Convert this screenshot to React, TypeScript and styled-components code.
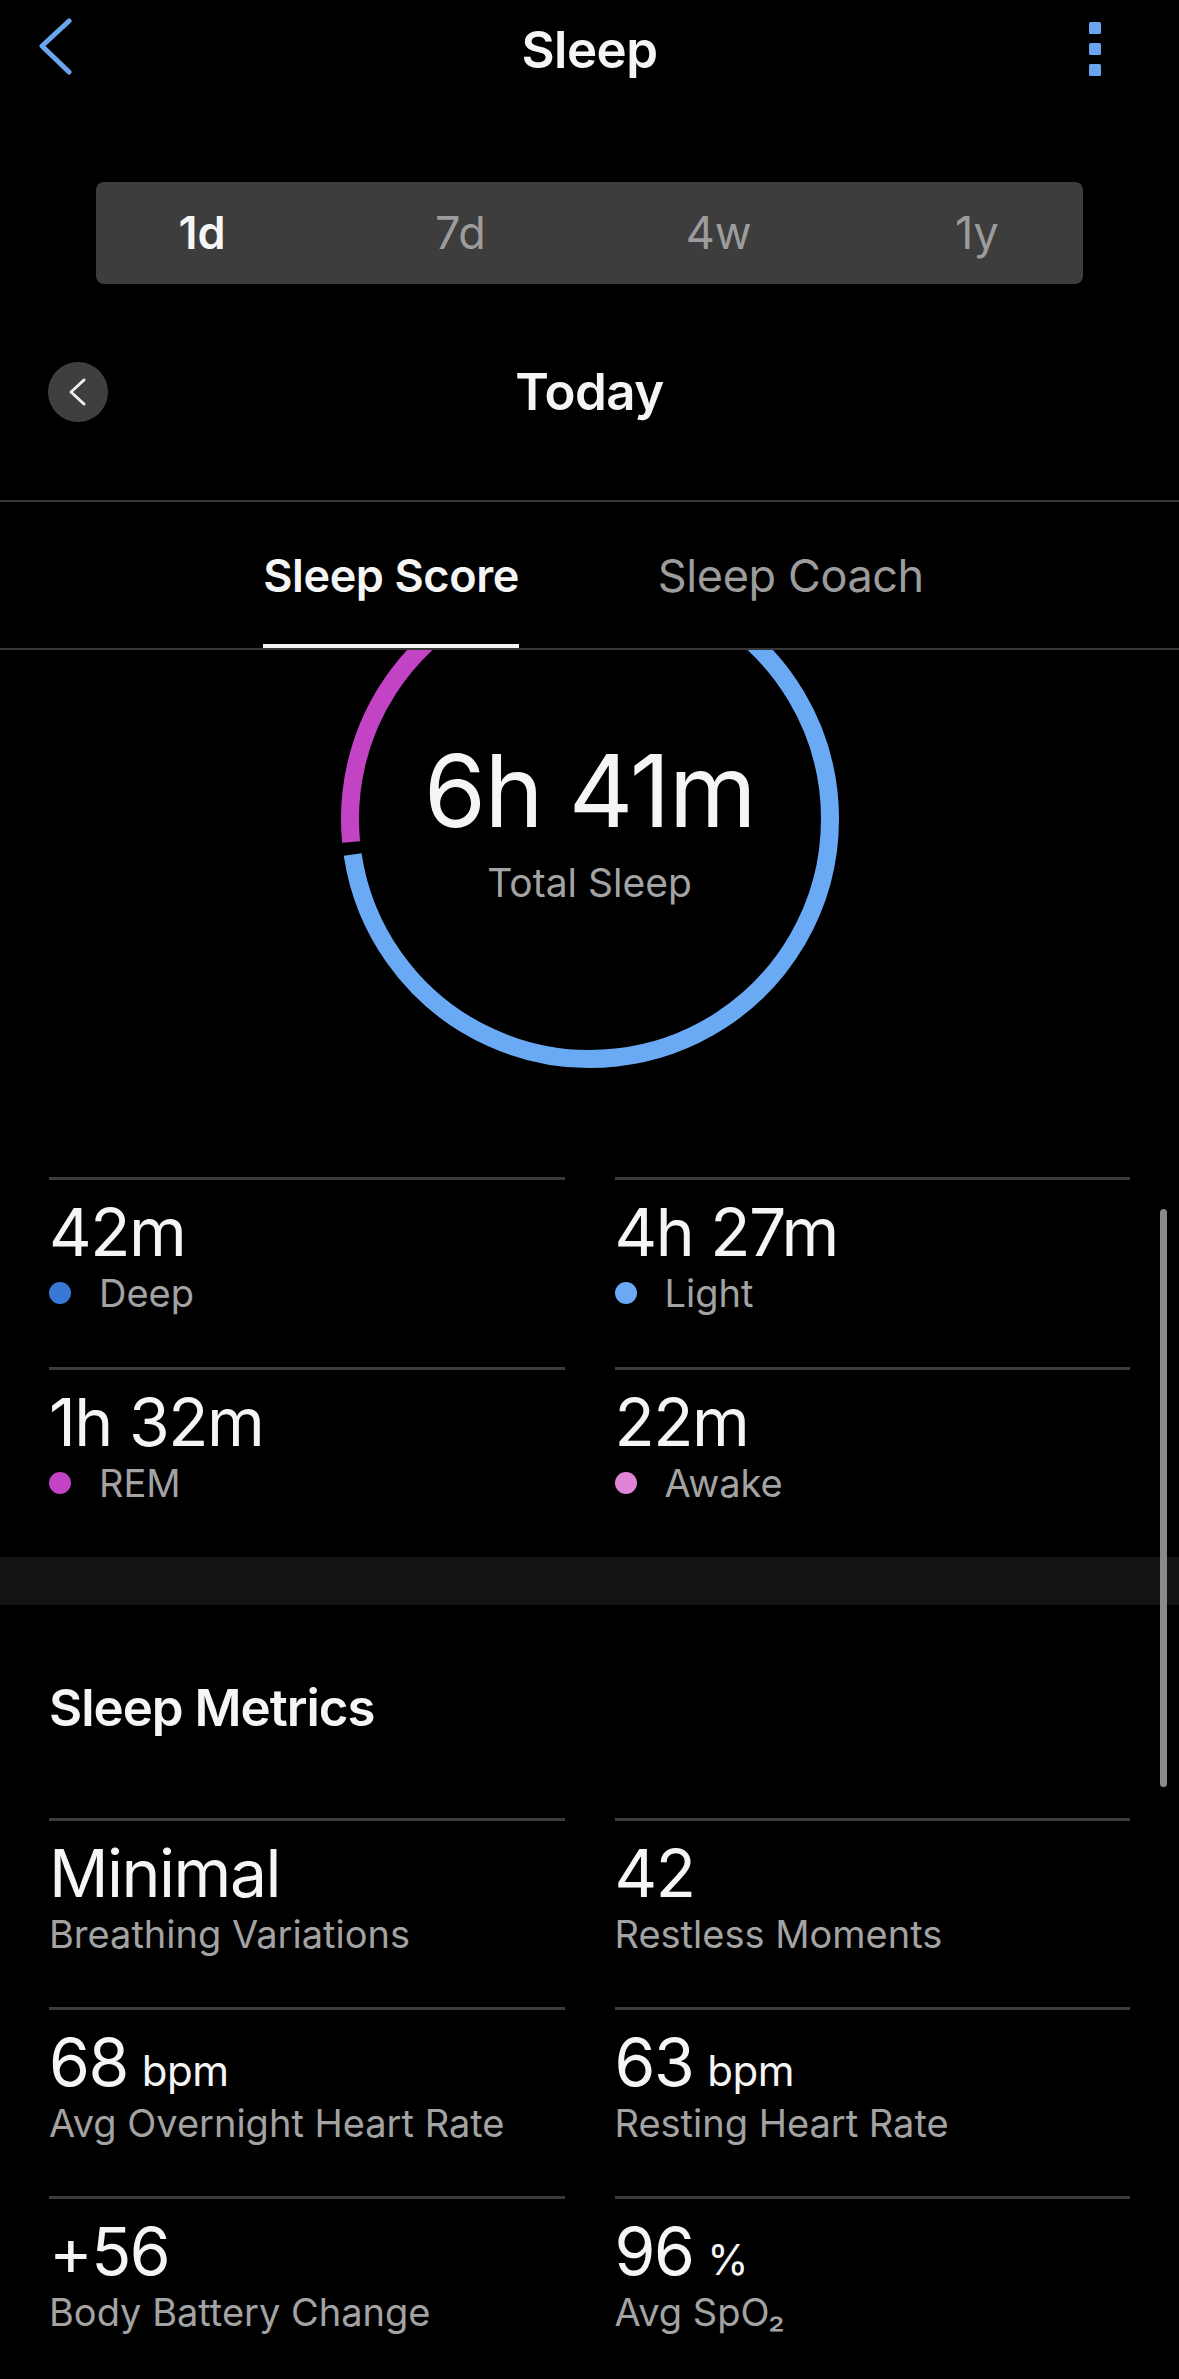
import React from 'react';
import styled, { createGlobalStyle } from 'styled-components';

const GlobalStyle = createGlobalStyle`
  html, body {
    margin: 0;
    padding: 0;
    background: #000;
    overflow: hidden;
  }
  body {
    font-family: Inter, "Noto Sans", "Liberation Sans", sans-serif;
    color: #f5f5f5;
    -webkit-font-smoothing: antialiased;
  }
  * {
    box-sizing: border-box;
  }
`;

const Screen = styled.div`
  position: relative;
  width: 1179px;
  height: 2379px;
  overflow: hidden;
  background: #000;
`;

const NavBar = styled.header`
  height: 100px;
  display: grid;
  grid-template-columns: 1fr auto 1fr;
  align-items: center;
`;

const BackIcon = styled.svg`
  margin-left: 38px;
  justify-self: start;
`;

const MenuIcon = styled.svg`
  margin-right: 78px;
  justify-self: end;
`;

const Title = styled.h1`
  margin: 0;
  font-size: 51px;
  line-height: 60px;
  font-weight: 600;
  letter-spacing: -0.5px;
  color: #f5f5f5;
`;

const Segmented = styled.div`
  margin: 82px 96px 0;
  height: 102px;
  background: #3d3d3d;
  border-radius: 8px;
  display: flex;
  align-items: center;
  justify-content: space-between;
  padding: 0 46px;
`;

const Segment = styled.div<{ active?: boolean }>`
  width: 120px;
  text-align: center;
  font-size: 45px;
  line-height: 54px;
  font-weight: ${p => (p.active ? 600 : 400)};
  color: ${p => (p.active ? '#f5f5f5' : '#9c9c9c')};
`;

const DateRow = styled.div`
  height: 218px;
  display: grid;
  grid-template-columns: 1fr auto 1fr;
  align-items: center;
  border-bottom: 2px solid #383838;
`;

const RoundButton = styled.div`
  justify-self: start;
  margin-left: 48px;
  width: 60px;
  height: 60px;
  border-radius: 50%;
  background: #3f3f3f;
  display: flex;
  align-items: center;
  justify-content: center;
`;

const TabBar = styled.nav`
  height: 148px;
  display: flex;
  justify-content: center;
  gap: 139px;
  padding-left: 8px;
  border-bottom: 2px solid #383838;
`;

const Tab = styled.div<{ active?: boolean }>`
  height: 146px;
  padding-top: 4px;
  display: flex;
  align-items: center;
  font-size: 45px;
  letter-spacing: -0.4px;
  font-weight: ${p => (p.active ? 600 : 400)};
  color: ${p => (p.active ? '#f5f5f5' : '#9c9c9c')};
  border-bottom: 4px solid ${p => (p.active ? '#f5f5f5' : 'transparent')};
`;

const RingSection = styled.section`
  overflow: hidden;
`;

const RingWrap = styled.div`
  position: relative;
  width: 520px;
  height: 520px;
  margin: -91px auto 98px;
`;

const RingText = styled.div`
  position: absolute;
  inset: 0;
  display: flex;
  flex-direction: column;
  align-items: center;
  padding-top: 182px;
`;

const BigValue = styled.div`
  font-size: 100px;
  line-height: 100px;
  font-weight: 400;
  letter-spacing: -1.5px;
  color: #f5f5f5;
`;

const BigLabel = styled.div`
  margin-top: 18px;
  font-size: 39px;
  line-height: 48px;
  color: #a3a3a3;
`;

const Grid = styled.div`
  display: grid;
  grid-template-columns: 1fr 1fr;
  column-gap: 50px;
  padding: 0 49px;
`;

const Cell = styled.div<{ h: number }>`
  height: ${p => p.h}px;
  border-top: 3px solid #3c3c3c;
  padding-top: 14px;
`;

const Value = styled.div`
  font-size: 66px;
  line-height: 76px;
  font-weight: 400;
  letter-spacing: -1.5px;
  color: #f5f5f5;
`;

const Unit = styled.span`
  font-size: 42px;
  line-height: 1;
  letter-spacing: -0.5px;
  margin-left: 14px;
`;

const Label = styled.div`
  display: flex;
  align-items: center;
  font-size: 38px;
  line-height: 46px;
  color: #a3a3a3;
`;

const Dot = styled.span<{ color: string }>`
  width: 22px;
  height: 22px;
  border-radius: 50%;
  background: ${p => p.color};
  margin-right: 28px;
  flex-shrink: 0;
`;

const Band = styled.div`
  height: 48px;
  background: #131313;
`;

const SectionTitle = styled.h2`
  margin: 0;
  padding: 72px 49px 79px;
  font-size: 51px;
  line-height: 62px;
  font-weight: 600;
  letter-spacing: -1px;
  color: #f5f5f5;
`;

const ScrollThumb = styled.div`
  position: absolute;
  right: 12px;
  top: 1209px;
  width: 7px;
  height: 578px;
  border-radius: 4px;
  background: #8a8a8a;
`;

const C = 260;
const R = 240;

const pt = (deg: number) => {
  const a = (deg * Math.PI) / 180;
  return `${(C + R * Math.sin(a)).toFixed(2)} ${(C - R * Math.cos(a)).toFixed(2)}`;
};

const arc = (from: number, to: number) => {
  const large = to - from > 180 ? 1 : 0;
  return `M ${pt(from)} A ${R} ${R} 0 ${large} 1 ${pt(to)}`;
};

const ringSegments = [
  { from: -0.5, to: 30, color: '#3a78d6' },
  { from: 32.5, to: 261.5, color: '#6aaaf5' },
  { from: 264.5, to: 341, color: '#c243c4' },
  { from: 343.5, to: 357, color: '#e184d6' },
];

const stages = [
  { value: '42m', label: 'Deep', color: '#3a78d6' },
  { value: '4h 27m', label: 'Light', color: '#6aaaf5' },
  { value: '1h 32m', label: 'REM', color: '#c243c4' },
  { value: '22m', label: 'Awake', color: '#e184d6' },
];

const metrics: { value: string; unit?: string; label: string }[] = [
  { value: 'Minimal', label: 'Breathing Variations' },
  { value: '42', label: 'Restless Moments' },
  { value: '68', unit: 'bpm', label: 'Avg Overnight Heart Rate' },
  { value: '63', unit: 'bpm', label: 'Resting Heart Rate' },
  { value: '+56', label: 'Body Battery Change' },
  { value: '96', unit: '%', label: 'Avg SpO₂' },
];

export default function App() {
  return (
    <Screen>
      <GlobalStyle />
      <NavBar>
        <BackIcon width="40" height="64" viewBox="0 0 40 64">
          <polyline points="31,3 4,28 31,54" fill="none" stroke="#6aa6f0" strokeWidth="5" strokeLinecap="round" strokeLinejoin="round" />
        </BackIcon>
        <Title>Sleep</Title>
        <MenuIcon width="12" height="56" viewBox="0 0 12 56">
          <rect x="0" y="0" width="12" height="12" rx="1.5" fill="#6aa6f0" />
          <rect x="0" y="21" width="12" height="12" rx="1.5" fill="#6aa6f0" />
          <rect x="0" y="42" width="12" height="12" rx="1.5" fill="#6aa6f0" />
        </MenuIcon>
      </NavBar>

      <Segmented>
        <Segment active>1d</Segment>
        <Segment>7d</Segment>
        <Segment>4w</Segment>
        <Segment>1y</Segment>
      </Segmented>

      <DateRow>
        <RoundButton>
          <svg width="20" height="30" viewBox="0 0 20 30">
            <polyline points="16,3 3,15 16,27" fill="none" stroke="#f0f0f0" strokeWidth="3" strokeLinecap="round" strokeLinejoin="round" />
          </svg>
        </RoundButton>
        <Title>Today</Title>
      </DateRow>

      <TabBar>
        <Tab active>Sleep Score</Tab>
        <Tab>Sleep Coach</Tab>
      </TabBar>

      <RingSection>
        <RingWrap>
          <svg width="520" height="520" viewBox="0 0 520 520">
            {ringSegments.map(s => (
              <path key={s.from} d={arc(s.from, s.to)} fill="none" stroke={s.color} strokeWidth="18" />
            ))}
          </svg>
          <RingText>
            <BigValue>6h 41m</BigValue>
            <BigLabel>Total Sleep</BigLabel>
          </RingText>
        </RingWrap>
      </RingSection>

      <Grid>
        {stages.map(s => (
          <Cell h={190} key={s.label}>
            <Value>{s.value}</Value>
            <Label>
              <Dot color={s.color} />
              {s.label}
            </Label>
          </Cell>
        ))}
      </Grid>

      <Band />

      <SectionTitle>Sleep Metrics</SectionTitle>

      <Grid>
        {metrics.map(m => (
          <Cell h={189} key={m.label}>
            <Value>
              {m.value}
              {m.unit && <Unit>{m.unit}</Unit>}
            </Value>
            <Label>{m.label}</Label>
          </Cell>
        ))}
      </Grid>

      <ScrollThumb />
    </Screen>
  );
}
